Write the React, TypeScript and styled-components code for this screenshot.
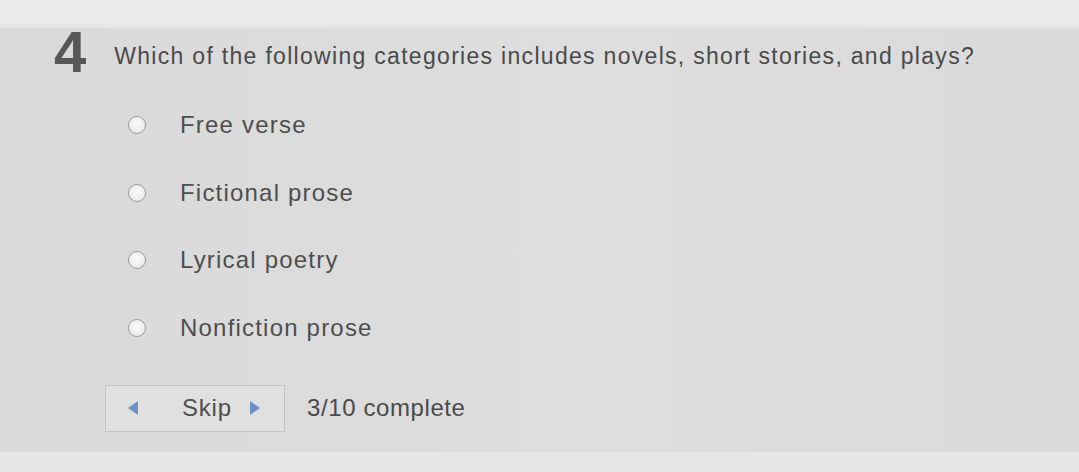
import React from "react";
import styled, { createGlobalStyle } from "styled-components";

const GlobalStyle = createGlobalStyle`
	html, body {
		margin: 0;
		padding: 0;
		background: #dbdbdb;
		font-family: "Liberation Sans", Arial, sans-serif;
		color: #4d4d4d;
	}
`;

const Page = styled.div`
	width: 1079px;
	height: 472px;
	display: flex;
	flex-direction: column;
	overflow: hidden;
	background: linear-gradient(90deg, #d9d9d9 0%, #dedede 55%, #dadada 100%);
`;

const TopStrip = styled.div`
	height: 28px;
	background: linear-gradient(180deg, #ececec 0%, #e9e9e9 85%, #e2e2e2 100%);
`;

const Content = styled.div`
	flex: 1;
	display: flex;
	flex-direction: column;
	padding: 0 0 0 54px;
`;

const QuestionRow = styled.div`
	display: flex;
	align-items: flex-start;
	gap: 28px;
`;

const Number = styled.div`
	font-size: 58px;
	font-weight: 700;
	line-height: 1;
	color: #575757;
	margin-top: -5px;
`;

const QuestionText = styled.div`
	font-size: 23px;
	letter-spacing: 1.3px;
	line-height: 1;
	margin-top: 17px;
	color: #4a4a4a;
`;

const OptionList = styled.div`
	display: flex;
	flex-direction: column;
	gap: 43.5px;
	margin: 32px 0 0 74px;
`;

const Option = styled.label`
	display: flex;
	align-items: center;
	gap: 34px;
	height: 24px;
	font-size: 24px;
	letter-spacing: 1.2px;
	color: #4e4e4e;
`;

const Radio = styled.span`
	width: 18px;
	height: 18px;
	border-radius: 50%;
	border: 1.5px solid #9a9a9a;
	background: radial-gradient(circle at 50% 40%, #fafafa 0%, #e6e6e6 100%);
	box-sizing: border-box;
	flex-shrink: 0;
`;

const Footer = styled.div`
	display: flex;
	align-items: center;
	gap: 22px;
	margin: 45px 0 0 51px;
`;

const SkipBox = styled.div`
	width: 180px;
	height: 47px;
	box-sizing: border-box;
	border: 1px solid #c4c4c4;
	background: #e0e0e0;
	display: flex;
	align-items: center;
	padding-left: 20px;
	font-size: 24px;
	letter-spacing: 0.8px;
	color: #4e4e4e;
`;

const Arrow = styled.svg<{ $before: number }>`
	width: 14px;
	height: 16px;
	margin-left: ${(p) => p.$before}px;
	flex-shrink: 0;
`;

const SkipLabel = styled.span`
	margin-left: 42px;
`;

const Progress = styled.span`
	font-size: 24px;
	letter-spacing: 0.6px;
	color: #4a4a4a;
`;

const BottomStrip = styled.div`
	height: 20px;
	background: #e7e7e7;
`;

const options = ["Free verse", "Fictional prose", "Lyrical poetry", "Nonfiction prose"];

const App: React.FC = () => {
	return (
		<>
			<GlobalStyle />
			<Page>
				<TopStrip />
				<Content>
					<QuestionRow>
						<Number>4</Number>
						<QuestionText>
							Which of the following categories includes novels, short stories, and plays?
						</QuestionText>
					</QuestionRow>
					<OptionList>
						{options.map((o) => (
							<Option key={o}>
								<Radio />
								{o}
							</Option>
						))}
					</OptionList>
					<Footer>
						<SkipBox>
							<Arrow $before={0} viewBox="0 0 14 16">
								<path d="M12 1 L2 8 L12 15 Z" fill="#6f8fc4" />
							</Arrow>
							<SkipLabel>Skip</SkipLabel>
							<Arrow $before={16} viewBox="0 0 14 16">
								<path d="M2 1 L12 8 L2 15 Z" fill="#6f8fc4" />
							</Arrow>
						</SkipBox>
						<Progress>3/10 complete</Progress>
					</Footer>
				</Content>
				<BottomStrip />
			</Page>
		</>
	);
};

export default App;
